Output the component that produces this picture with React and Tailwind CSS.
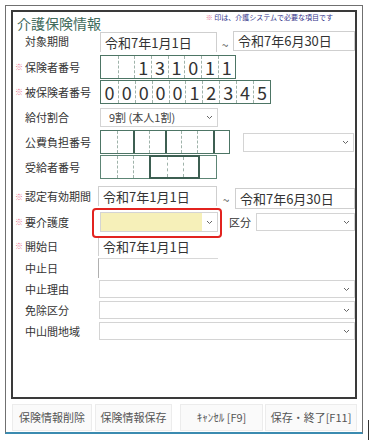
import React from 'react'

const JP = { fontFamily: '"Noto Sans CJK JP", "Noto Sans", sans-serif' }

function Chevron() {
  return (
    <svg width="7" height="5" viewBox="0 0 7 5" className="shrink-0">
      <path d="M1 1 L3.5 3.5 L6 1" fill="none" stroke="#666" strokeWidth="1" />
    </svg>
  )
}

function Label({ req, children }) {
  return (
    <div className="w-[87px] shrink-0 flex items-center pl-[2px] text-[11px] text-[#333]">
      <span className="w-[10px] text-[8px] text-[#e8708e] leading-none">{req ? '※' : ''}</span>
      <span>{children}</span>
    </div>
  )
}

function Select({ className = '', value = '', yellow = false }) {
  return (
    <div className={`flex items-center justify-between border border-[#d4d4d4] bg-white pr-[4px] text-[11px] text-[#444] ${className}`}>
      <div className={`h-full flex-1 flex items-center pl-[8px] ${yellow ? 'bg-[#f6f0b9] mr-[4px]' : ''}`}>{value}</div>
      <Chevron />
    </div>
  )
}

function DateField({ className = '', value }) {
  return (
    <div className={`flex items-center pl-[4px] text-[13px] text-[#333] ${className}`}>{value}</div>
  )
}

function Cells({ digits, w }) {
  return digits.map((d, i) => (
    <div
      key={i}
      className={`h-full flex items-center justify-center text-[18px] text-[#333] ${i > 0 ? 'border-l border-dashed border-[#9fb3aa]' : ''}`}
      style={{ width: w }}
    >
      {d}
    </div>
  ))
}

export default function App() {
  return (
    <div className="relative w-[371px] h-[440px] bg-white overflow-hidden" style={JP}>
      {/* outer frame */}
      <div className="ml-[5px] mt-[5px] w-[358px] h-[429px] border border-[#707070] border-b-2 border-b-[#3b8bb0] px-[5px] pt-[4px] flex flex-col">
        {/* inner box */}
        <div className="h-[389px] border-2 border-[#3a3a3a] flex flex-col">
          {/* title */}
          <div className="h-[19px] flex items-start justify-between pl-[4px] pr-[22px]">
            <div className="text-[14px] leading-[20px] text-[#416b5c] mt-[1px]">介護保険情報</div>
            <div className="text-[7px] leading-[9px] text-[#34348a] mt-[1px]">
              <span className="text-[#e8708e]">※</span> 印は、介護システムで必要な項目です
            </div>
          </div>

          {/* 対象期間 */}
          <div className="h-[21px] flex">
            <Label>対象期間</Label>
            <DateField className="w-[118px] h-[20px] mt-[1px] border-t border-x border-[#cfcfcf]" value="令和7年1月1日" />
            <div className="w-[16px] text-center text-[12px] text-[#555] leading-[28px]">~</div>
            <DateField className="w-[123px] h-[20px] border border-[#cfcfcf]" value="令和7年6月30日" />
          </div>

          {/* 保険者番号 */}
          <div className="mt-[3px] h-[24px] flex">
            <Label req>保険者番号</Label>
            <div className="flex h-full border-[1.5px] border-[#4d7565]">
              <Cells digits={['', '', '1', '3', '1', '0', '1', '1']} w={16.7} />
            </div>
          </div>

          {/* 被保険者番号 */}
          <div className="mt-[1px] h-[24px] flex">
            <Label req>被保険者番号</Label>
            <div className="flex h-full border-[1.5px] border-[#4d7565]">
              <Cells digits={['0', '0', '0', '0', '0', '1', '2', '3', '4', '5']} w={16.9} />
            </div>
          </div>

          {/* 給付割合 */}
          <div className="mt-[4px] h-[19px] flex">
            <Label>給付割合</Label>
            <Select className="w-[118px] h-full" value="9割 (本人1割)" />
          </div>

          {/* 公費負担番号 */}
          <div className="mt-[3px] h-[24px] flex">
            <Label>公費負担番号</Label>
            <div className="flex h-full border-[1.5px] border-[#4d7565]">
              <div className="w-[16px] h-full" />
              <div className="w-[16px] h-full border-l border-dashed border-[#9fb3aa]" />
              <div className="w-[16px] h-full border-l-2 border-[#3d5f52]" />
              <div className="w-[16px] h-full border-l border-dashed border-[#9fb3aa]" />
              <div className="w-[16px] h-full border-l-2 border-[#3d5f52]" />
              <div className="w-[16px] h-full border-l border-dashed border-[#9fb3aa]" />
              <div className="w-[16px] h-full border-l border-dashed border-[#9fb3aa]" />
              <div className="w-[16px] h-full border-l-2 border-[#3d5f52]" />
            </div>
            <Select className="ml-[13px] mt-[3px] w-[111px] h-[19px]" />
          </div>

          {/* 受給者番号 */}
          <div className="mt-[1px] h-[24px] flex">
            <Label>受給者番号</Label>
            <div className="flex h-full border border-[#5d8575]">
              <div className="w-[16px] h-full" />
              <div className="w-[16px] h-full border-l border-dashed border-[#9fb3aa]" />
              <div className="w-[16px] h-full border-l border-dashed border-[#9fb3aa]" />
              <div className="flex -my-px border-2 border-[#3d5f52]">
                <div className="w-[16px] h-full" />
                <div className="w-[16px] h-full border-l border-dashed border-[#9fb3aa]" />
                <div className="w-[15px] h-full border-l border-dashed border-[#9fb3aa]" />
              </div>
              <div className="w-[16px] h-full" />
            </div>
          </div>

          {/* 認定有効期間 */}
          <div className="mt-[7px] h-[21px] flex">
            <Label req>認定有効期間</Label>
            <DateField className="w-[120px] -ml-[2px] h-[20px] border-t border-x border-[#cfcfcf]" value="令和7年1月1日" />
            <div className="w-[18px] text-center text-[12px] text-[#555] leading-[28px]">~</div>
            <DateField className="w-[121px] h-[21px] mt-[2px] border border-[#cfcfcf]" value="令和7年6月30日" />
          </div>

          {/* 要介護度 */}
          <div className="mt-[5px] h-[20px] flex items-center">
            <Label req>要介護度</Label>
            <div className="relative">
              <Select className="w-[118px] h-[20px] border-[#cfcfcf]" yellow />
              <div className="absolute -left-[8px] -top-[4px] w-[130px] h-[30px] rounded-[4px] border-[2.5px] border-[#e2231f]" />
            </div>
            <div className="ml-[11px] w-[27px] text-[11px] text-[#333]">区分</div>
            <Select className="w-[99px] h-[18px]" />
          </div>

          {/* 開始日 */}
          <div className="mt-[4px] h-[20px] flex">
            <Label req>開始日</Label>
            <DateField className="w-[120px] -ml-[2px] h-[20px] border-t border-l border-[#cfcfcf]" value="令和7年1月1日" />
          </div>

          {/* 中止日 */}
          <div className="mt-[2px] h-[20px] flex">
            <Label>中止日</Label>
            <div className="w-[120px] -ml-[2px] h-[20px] border-t border-l border-t-[#d8d8d8] border-l-[#b0b0b0]" />
          </div>

          {/* 中止理由 */}
          <div className="mt-[2px] h-[18px] flex">
            <Label>中止理由</Label>
            <Select className="w-[256px] -ml-px h-full" />
          </div>

          {/* 免除区分 */}
          <div className="mt-[3px] h-[18px] flex">
            <Label>免除区分</Label>
            <Select className="w-[256px] -ml-px h-full" />
          </div>

          {/* 中山間地域 */}
          <div className="mt-[3px] h-[18px] flex">
            <Label>中山間地域</Label>
            <Select className="w-[256px] -ml-px h-full" />
          </div>
        </div>

        {/* buttons */}
        <div className="mt-[5px] h-[27px] flex text-[11px] text-[#555]">
          <div className="ml-[1px] w-[80px] h-full flex items-center justify-center bg-[#fafafa] border border-[#ececec]">保険情報削除</div>
          <div className="ml-[3px] w-[77px] h-full flex items-center justify-center bg-[#fafafa] border border-[#ececec]">保険情報保存</div>
          <div className="ml-[8px] w-[83px] h-full flex items-center justify-center bg-[#fafafa] border border-[#ececec]">ｷｬﾝｾﾙ [F9]</div>
          <div className="ml-[2px] w-[92px] h-full flex items-center justify-center bg-[#fafafa] border border-[#ececec]">保存・終了[F11]</div>
        </div>
      </div>
      <div className="absolute left-[368px] top-[420px] w-px h-[20px] bg-[#333]" />
    </div>
  )
}
